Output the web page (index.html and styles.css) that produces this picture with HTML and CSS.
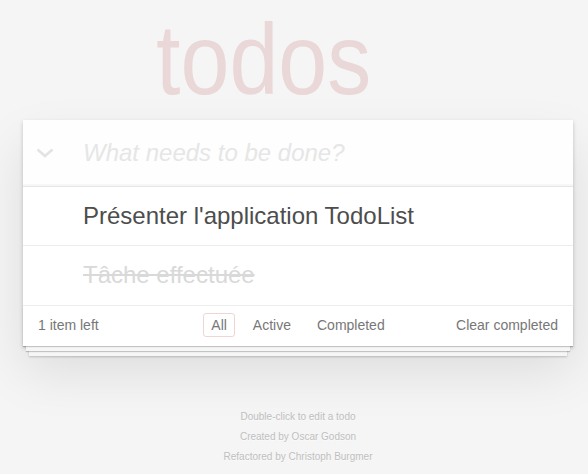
FILE: index.html
```html
<!DOCTYPE html>
<html lang="fr">
<head>
<meta charset="utf-8">
<title>Todos</title>
<link rel="stylesheet" href="styles.css">
</head>
<body>
<div class="page">
  <header class="header">
    <h1 class="title">todos</h1>
  </header>
  <section class="todoapp">
    <div class="new-row">
      <span class="toggle-all">
        <svg width="18" height="10" viewBox="0 0 18 10"><polyline points="1.5,1.5 9,8 16.5,1.5" fill="none" stroke="#e3e3e3" stroke-width="2.6"/></svg>
      </span>
      <input class="new-todo" placeholder="What needs to be done?">
    </div>
    <ul class="todo-list">
      <li class="todo"><label>Présenter l'application TodoList</label></li>
      <li class="todo completed"><label>Tâche effectuée</label></li>
    </ul>
    <footer class="footer">
      <span class="todo-count">1 item left</span>
      <ul class="filters">
        <li><a class="selected" href="#/">All</a></li>
        <li><a href="#/active">Active</a></li>
        <li><a href="#/completed">Completed</a></li>
      </ul>
      <span class="clear-completed">Clear completed</span>
    </footer>
  </section>
  <footer class="info">
    <p>Double-click to edit a todo</p>
    <p>Created by Oscar Godson</p>
    <p>Refactored by Christoph Burgmer</p>
  </footer>
</div>
</body>
</html>
```

FILE: styles.css
```css
html, body {
  margin: 0;
  padding: 0;
}
body {
  font: 14px "Liberation Sans", Arial, sans-serif;
  line-height: 1.4em;
  background: #f5f5f5;
  color: #4d4d4d;
}
.page {
  width: 550px;
  margin-left: 23px;
}
.header {
  padding-top: 9px;
  margin-bottom: 11px;
  height: 100px;
}
.title {
  margin: 0;
  font-size: 100px;
  line-height: 100px;
  font-weight: normal;
  color: rgba(175, 47, 47, 0.15);
  padding-left: 133px;
  transform: scaleX(0.88);
  transform-origin: 133px 0;
}
.todoapp {
  background: #fff;
  position: relative;
  box-shadow: 0 2px 4px 0 rgba(0, 0, 0, 0.2), 0 25px 50px 0 rgba(0, 0, 0, 0.1);
}
.new-row {
  position: relative;
}
.toggle-all {
  position: absolute;
  left: 13px;
  top: 28px;
  width: 18px;
  height: 10px;
  display: flex;
}
.new-todo {
  display: block;
  margin: 0;
  width: 100%;
  box-sizing: border-box;
  font: italic 24px "Liberation Sans", Arial, sans-serif;
  line-height: 1.4em;
  padding: 16px 16px 16px 60px;
  border: none;
  outline: none;
  color: #4d4d4d;
  background: rgba(0, 0, 0, 0.003);
  box-shadow: inset 0 -2px 1px rgba(0, 0, 0, 0.03);
}
.new-todo::placeholder {
  color: #e6e6e6;
  font-style: italic;
}
.todo-list {
  margin: 0;
  padding: 0;
  list-style: none;
  border-top: 1px solid #e6e6e6;
}
.todo {
  font-size: 24px;
  border-bottom: 1px solid #ededed;
}
.todo label {
  display: block;
  padding: 15px 60px 15px 15px;
  margin-left: 45px;
  line-height: 1.2;
}
.todo.completed label {
  color: #d9d9d9;
  text-decoration: line-through;
}
.footer {
  color: #777;
  background: #fff;
  padding: 10px 15px;
  height: 20px;
  display: grid;
  grid-template-columns: 1fr auto 1fr;
  align-items: start;
  box-shadow: 0 1px 1px rgba(0, 0, 0, 0.2),
              0 8px 0 -3px #f6f6f6,
              0 9px 1px -3px rgba(0, 0, 0, 0.2),
              0 16px 0 -6px #f6f6f6,
              0 17px 2px -6px rgba(0, 0, 0, 0.2);
}
.todo-count {
  text-align: left;
}
.filters {
  margin: 0;
  padding: 0;
  list-style: none;
  display: flex;
  gap: 4px;
}
.filters a {
  color: inherit;
  margin: 3px;
  padding: 3px 7px;
  text-decoration: none;
  border: 1px solid transparent;
  border-radius: 3px;
}
.filters a.selected {
  border-color: rgba(175, 47, 47, 0.2);
}
.clear-completed {
  text-align: right;
}
.info {
  margin-top: 66px;
  color: #bfbfbf;
  font-size: 10px;
  text-shadow: 0 1px 0 rgba(255, 255, 255, 0.5);
  text-align: center;
}
.info p {
  margin: 0 0 10px;
  line-height: 1;
}
```
